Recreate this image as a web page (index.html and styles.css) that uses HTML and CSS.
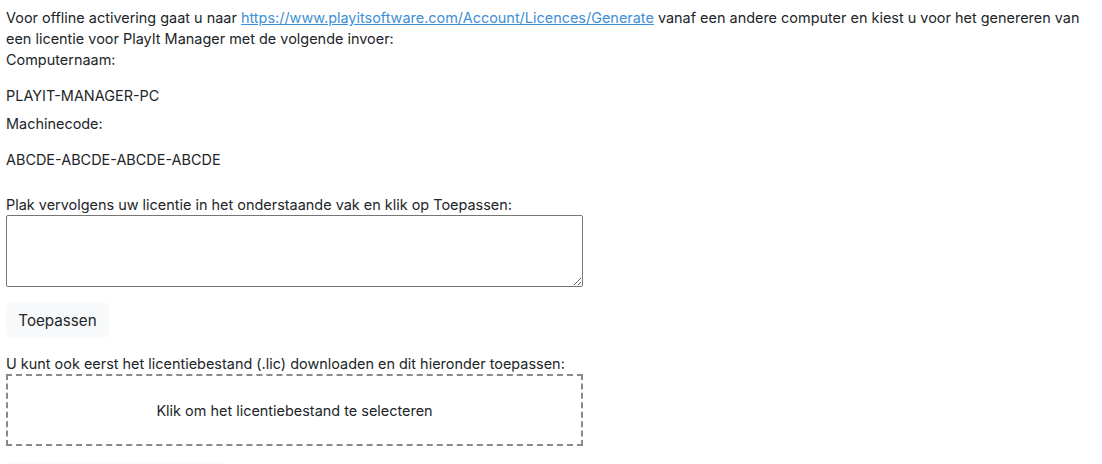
FILE: index.html
```html
<!DOCTYPE html>
<html lang="nl">
<head>
<meta charset="utf-8">
<title>Offline activering</title>
<link rel="stylesheet" href="styles.css">
</head>
<body>
<div class="page">
  <p class="intro">Voor offline activering gaat u naar <a href="#" class="link">https://www.playitsoftware.com/Account/Licences/Generate</a> vanaf een andere computer en kiest u voor het genereren van een licentie voor PlayIt Manager met de volgende invoer:</p>
  <div class="label">Computernaam:</div>
  <p class="value">PLAYIT-MANAGER-PC</p>
  <div class="label">Machinecode:</div>
  <p class="value">ABCDE-ABCDE-ABCDE-ABCDE</p>
  <div class="label paste-label">Plak vervolgens uw licentie in het onderstaande vak en klik op Toepassen:</div>
  <textarea class="license-input"></textarea>
  <button class="btn" type="button">Toepassen</button>
  <div class="label">U kunt ook eerst het licentiebestand (.lic) downloaden en dit hieronder toepassen:</div>
  <div class="dropzone">Klik om het licentiebestand te selecteren</div>
  <div class="btn-ghost"></div>
</div>
</body>
</html>
```
FILE: styles.css
```css
html, body {
  margin: 0;
  padding: 0;
  background: #ffffff;
}
.page {
  padding: 7px 6px 0 6px;
  font-family: Inter, "Noto Sans", sans-serif;
  font-size: 14.45px;
  line-height: 21px;
  color: #212529;
  display: flex;
  flex-direction: column;
  align-items: flex-start;
}
.intro {
  margin: 0;
  max-width: 1090px;
}
.link {
  color: #3d8fd6;
  text-decoration: underline;
}
.label {
  margin: 0;
}
.value {
  margin: 15px 0 7px 0;
}
.value + .label.paste-label {
  margin-top: 17px;
}
.license-input {
  box-sizing: border-box;
  width: 577px;
  height: 72px;
  margin: 0;
  border: 1px solid #767676;
  border-radius: 2px;
  font-family: inherit;
  font-size: 14px;
  padding: 4px;
  resize: vertical;
}
.btn {
  margin: 15px 0 15px 0;
  height: 36px;
  width: 103px;
  padding: 0;
  border: none;
  border-radius: 6px;
  background: #f8f9fa;
  color: #212529;
  font-family: inherit;
  font-size: 15.2px;
  line-height: 21px;
}
.dropzone {
  box-sizing: border-box;
  width: 577px;
  height: 72px;
  margin-top: 0;
  border: 2px dashed #8a8a8a;
  display: flex;
  align-items: center;
  justify-content: center;
  color: #212529;
}
.btn-ghost {
  margin-top: 16px;
  width: 220px;
  height: 36px;
  border-radius: 6px;
  background: #f8f9fa;
}
```
